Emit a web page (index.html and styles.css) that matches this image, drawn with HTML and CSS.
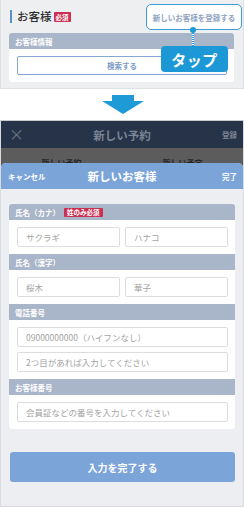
FILE: index.html
```html
<!DOCTYPE html>
<html lang="ja">
<head>
<meta charset="utf-8">
<link rel="stylesheet" href="styles.css">
</head>
<body>
<div class="top">
  <div class="title-row">
    <span class="bar"></span>
    <span class="title">お客様</span>
    <span class="badge">必須</span>
  </div>
  <div class="card small-card">
    <div class="sec-head">お客様情報</div>
    <div class="sec-body">
      <div class="search-btn">検索する</div>
    </div>
  </div>
  <div class="callout">新しいお客様を登録する</div>
  <div class="dot"></div>
  <div class="dotline"></div>
  <div class="tap">タップ</div>
</div>
<div class="arrow-row">
  <svg width="44" height="20" viewBox="0 0 44 20"><path d="M11 0H33V6H43L22 19L1 6H11Z" fill="#1e9ad6"/></svg>
</div>
<div class="phone">
  <div class="nav">
    <span class="close">×</span>
    <span class="nav-title">新しい予約</span>
    <span class="nav-right">登録</span>
  </div>
  <div class="tabs">
    <span class="tab">新しい予約</span>
    <span class="tab">新しい予定</span>
  </div>
  <div class="modal">
    <div class="modal-head">
      <span class="mh-left">キャンセル</span>
      <span class="mh-title">新しいお客様</span>
      <span class="mh-right">完了</span>
    </div>
    <div class="modal-body">
      <div class="card form-card">
        <div class="sec-head">氏名（カナ）<span class="badge small">姓のみ必須</span></div>
        <div class="sec-body two">
          <div class="input">サクラギ</div>
          <div class="input">ハナコ</div>
        </div>
        <div class="sec-head">氏名（漢字）</div>
        <div class="sec-body two">
          <div class="input">桜木</div>
          <div class="input">華子</div>
        </div>
        <div class="sec-head">電話番号</div>
        <div class="sec-body stack">
          <div class="input">09000000000（ハイフンなし）</div>
          <div class="input">2つ目があれば入力してください</div>
        </div>
        <div class="sec-head">お客様番号</div>
        <div class="sec-body stack">
          <div class="input">会員証などの番号を入力してください</div>
        </div>
      </div>
      <div class="done-btn">入力を完了する</div>
    </div>
  </div>
</div>
</body>
</html>
```

FILE: styles.css
```css
* { box-sizing: border-box; }
html, body { margin: 0; padding: 0; background: #fff; }
body {
  width: 244px;
  height: 509px;
  overflow: hidden;
  font-family: "Noto Sans CJK JP", "Noto Sans", sans-serif;
  color: #333;
}
.top {
  position: relative;
  height: 89px;
  background: #eeeff1;
  border: 1px solid #dfe0e3;
  border-top: none;
  padding-top: 9px;
}
.title-row {
  display: flex;
  align-items: center;
  height: 15px;
  padding-left: 9px;
}
.bar {
  width: 2px;
  height: 13px;
  background: #5b8fd0;
  margin-right: 5px;
}
.title {
  font-size: 11.5px;
  font-weight: 500;
  color: #2f2f2f;
  line-height: 15px;
}
.badge {
  display: inline-block;
  background: #cc2f52;
  color: #fff;
  font-size: 6.5px;
  font-weight: 700;
  line-height: 10px;
  padding: 0 2px;
  margin-left: 2px;
  border-radius: 1px;
}
.card {
  background: #fff;
  border-radius: 3px;
  overflow: hidden;
  margin-left: 8px;
  margin-right: 9px;
}
.small-card { margin-top: 9px; }
.sec-head {
  display: flex;
  align-items: center;
  height: 16px;
  background: #a9b5c8;
  color: #fff;
  font-size: 7.5px;
  font-weight: 700;
  padding-left: 6px;
}
.sec-body {
  padding: 7px 7px 7px 8px;
}
.search-btn {
  height: 19px;
  border: 1px solid #86a6d2;
  border-radius: 2px;
  color: #7c9bc6;
  font-size: 7.5px;
  font-weight: 700;
  display: flex;
  align-items: center;
  justify-content: center;
}
.callout {
  position: absolute;
  left: 145px;
  top: 4px;
  width: 96px;
  height: 26px;
  background: #fff;
  border: 1.5px solid #3b9dd6;
  border-radius: 5px;
  color: #8fa3c0;
  font-size: 7.5px;
  font-weight: 700;
  display: flex;
  align-items: center;
  justify-content: center;
  white-space: nowrap;
}
.dot {
  position: absolute;
  left: 189px;
  top: 27px;
  width: 6px;
  height: 6px;
  border-radius: 50%;
  background: #1e9ad6;
}
.dotline {
  position: absolute;
  left: 191px;
  top: 33px;
  width: 2px;
  height: 13px;
  background: repeating-linear-gradient(#1e9ad6 0 1px, #fff 1px 2px);
}
.tap {
  position: absolute;
  left: 160px;
  top: 46px;
  width: 67px;
  height: 26px;
  background: #1b98d5;
  border-radius: 4px;
  color: #fff;
  font-size: 15px;
  font-weight: 700;
  display: flex;
  align-items: center;
  justify-content: center;
  letter-spacing: 0.5px;
}
.arrow-row {
  height: 31px;
  display: flex;
  justify-content: center;
  padding-top: 6px;
}
.arrow-row svg { display: block; margin-left: 1px; }
.phone {
  position: relative;
  height: 387px;
  border: 1px solid #d9dbdf;
  border-top: 1px solid #c8cacd;
  background: #eceef1;
  overflow: hidden;
}
.nav {
  height: 27px;
  background: #263349;
  display: flex;
  align-items: center;
  position: relative;
}
.close {
  position: absolute;
  left: 8px;
  top: 4px;
  font-size: 15px;
  line-height: 18px;
  color: #6d7888;
}
.nav-title {
  flex: 1;
  text-align: center;
  font-size: 11.5px;
  font-weight: 700;
  color: #7a8494;
}
.nav-right {
  position: absolute;
  right: 6px;
  top: 8px;
  font-size: 7.5px;
  font-weight: 700;
  color: #7a8494;
}
.tabs {
  height: 30px;
  background: #5c5c5c;
  display: flex;
}
.tab {
  flex: 1;
  text-align: center;
  font-size: 8px;
  font-weight: 700;
  color: #262626;
  line-height: 10px;
  padding-top: 10px;
}
.modal {
  position: absolute;
  left: 0;
  right: 0;
  top: 42px;
  bottom: 0;
  background: #eceef1;
  border-radius: 5px 5px 0 0;
  overflow: hidden;
}
.modal-head {
  height: 26px;
  background: #7ba4d9;
  display: flex;
  align-items: center;
  position: relative;
  color: #fff;
  font-weight: 700;
}
.mh-left {
  position: absolute;
  left: 7px;
  font-size: 7.5px;
}
.mh-title {
  flex: 1;
  text-align: center;
  font-size: 11.5px;
}
.mh-right {
  position: absolute;
  right: 6px;
  font-size: 7.5px;
}
.modal-body {
  padding-top: 15px;
}
.form-card { margin-left: 8px; margin-right: 8px; }
.badge.small {
  font-size: 6.5px;
  line-height: 9px;
  margin-left: 4px;
  padding: 0 3px;
}
.two {
  display: flex;
  gap: 5px;
}
.two .input { flex: 1; }
.stack {
  display: flex;
  flex-direction: column;
  gap: 5px;
}
.input {
  height: 20px;
  border: 1px solid #dcdde0;
  border-radius: 2px;
  color: #a3a3a3;
  font-size: 8.5px;
  display: flex;
  align-items: center;
  padding-left: 8px;
  white-space: nowrap;
}
.done-btn {
  margin: 23px 8px 0 9px;
  height: 30px;
  background: #7ba4d9;
  border-radius: 3px;
  color: #fff;
  font-size: 10px;
  font-weight: 700;
  display: flex;
  align-items: center;
  justify-content: center;
}
```
